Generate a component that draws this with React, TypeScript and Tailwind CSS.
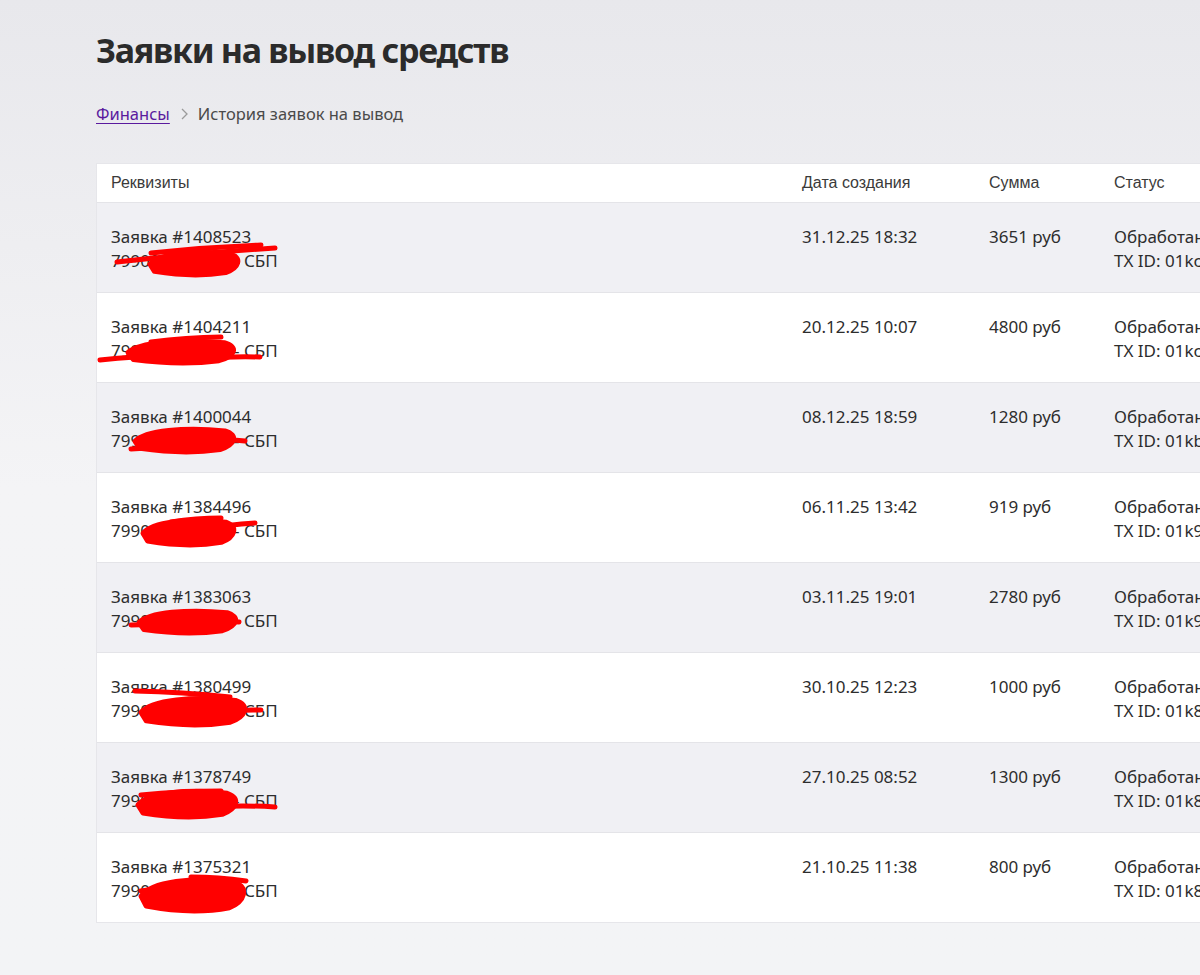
import React from 'react';

type Blob = { x0: number; y0: number; x1: number; y1: number };
type Tail = [number, number, number, number];

type Row = {
  id: string;
  date: string;
  sum: string;
  tx: string;
  blob: Blob;
  tails: Tail[];
};

// redaction marks are in cell coordinates (cell origin = first text line top-left)
const rows: Row[] = [
  { id: '1408523', date: '31.12.25 18:32', sum: '3651 руб', tx: '01kc', blob: { x0: 39, y0: 26, x1: 128, y1: 50 }, tails: [[6, 37, 164, 23], [40, 28, 150, 20]] },
  { id: '1404211', date: '20.12.25 10:07', sum: '4800 руб', tx: '01kc', blob: { x0: 17, y0: 25, x1: 124, y1: 48 }, tails: [[-11, 45, 60, 41], [90, 44, 149, 42], [40, 27, 110, 22]] },
  { id: '1400044', date: '08.12.25 18:59', sum: '1280 руб', tx: '01kb', blob: { x0: 24, y0: 23, x1: 124, y1: 47 }, tails: [[100, 36, 134, 36], [20, 44, 70, 44]] },
  { id: '1384496', date: '06.11.25 13:42', sum: '919 руб', tx: '01k9', blob: { x0: 32, y0: 24, x1: 124, y1: 50 }, tails: [[90, 35, 144, 28], [60, 27, 110, 23]] },
  { id: '1383063', date: '03.11.25 19:01', sum: '2780 руб', tx: '01k9', blob: { x0: 28, y0: 25, x1: 126, y1: 48 }, tails: [[20, 40, 60, 42], [100, 38, 128, 37]] },
  { id: '1380499', date: '30.10.25 12:23', sum: '1000 руб', tx: '01k8', blob: { x0: 30, y0: 22, x1: 135, y1: 50 }, tails: [[24, 16, 119, 22], [90, 38, 150, 35]] },
  { id: '1378749', date: '27.10.25 08:52', sum: '1300 руб', tx: '01k8', blob: { x0: 27, y0: 25, x1: 126, y1: 52 }, tails: [[100, 42, 164, 42], [30, 30, 110, 26]] },
  { id: '1375321', date: '21.10.25 11:38', sum: '800 руб', tx: '01k8', blob: { x0: 30, y0: 23, x1: 134, y1: 56 }, tails: [[80, 22, 135, 26], [30, 36, 60, 34]] },
];

const blobPath = ({ x0, y0, x1, y1 }: Blob) => {
  const w = x1 - x0;
  const h = y1 - y0;
  return `M ${x0} ${y0 + h * 0.55} C ${x0 + w * 0.1} ${y0 + h * 0.1}, ${x0 + w * 0.5} ${y0 - h * 0.05}, ${x1 - w * 0.1} ${y0 + h * 0.12} C ${x1 + w * 0.04} ${y0 + h * 0.3}, ${x1} ${y0 + h * 0.7}, ${x1 - w * 0.15} ${y1 - h * 0.1} C ${x0 + w * 0.6} ${y1 + h * 0.05}, ${x0 + w * 0.3} ${y1}, ${x0 + w * 0.05} ${y1 - h * 0.15} Z`;
};

const Redaction: React.FC<{ blob: Blob; tails: Tail[] }> = ({ blob, tails }) => (
  <svg className="pointer-events-none absolute left-[-20px] top-0 h-[70px] w-[220px] overflow-visible" viewBox="-20 0 220 70">
    <path d={blobPath(blob)} fill="#ff0000" stroke="#ff0000" strokeWidth={5} strokeLinejoin="round" />
    {tails.map(([a, b, c, d], i) => (
      <path
        key={i}
        d={`M ${a} ${b} Q ${(a + c) / 2} ${(b + d) / 2 - 2} ${c} ${d}`}
        fill="none"
        stroke="#ff0000"
        strokeWidth={5}
        strokeLinecap="round"
      />
    ))}
  </svg>
);

export default function App() {
  return (
    <div
      className="min-h-screen w-full overflow-hidden bg-gradient-to-b from-[#e8e8ec] via-[#f4f4f6] to-[#f3f4f6] text-[#2d2d2d]"
      style={{ fontFamily: '"Noto Sans", "Open Sans", sans-serif' }}
    >
      <div className="pl-[96px] pt-[26px]">
        <h1 className="text-[34px] font-bold leading-[48px] tracking-[-1.3px] text-[#2b2b2b]">Заявки на вывод средств</h1>

        <div className="mt-[28px] flex items-center text-[16.5px] leading-[24px]">
          <a href="#" className="text-[#5a1a9e] underline underline-offset-[3px]">Финансы</a>
          <svg className="mx-[8px] h-[14px] w-[12px]" viewBox="0 0 12 14">
            <path d="M4 2 L9 7 L4 12" fill="none" stroke="#9a9a9a" strokeWidth="1.3" />
          </svg>
          <span className="text-[#4a4a4a]">История заявок на вывод</span>
        </div>

        <div className="mt-[37px] w-[1300px] border border-[#e6e6ea] bg-white">
          <div
            className="grid h-[38px] grid-cols-[691px_187px_125px_1fr] items-center pl-[14px] text-[16px] text-[#3a3a3a]"
            style={{ fontFamily: '"Liberation Sans", Arial, sans-serif' }}
          >
            <div>Реквизиты</div>
            <div>Дата создания</div>
            <div>Сумма</div>
            <div>Статус</div>
          </div>
          {rows.map((r, i) => (
            <div
              key={r.id}
              className={`grid h-[90px] grid-cols-[691px_187px_125px_1fr] border-t border-[#e4e4e8] pl-[14px] pt-[22px] text-[17px] leading-[24px] ${
                i % 2 === 0 ? 'bg-[#f0f0f4]' : 'bg-white'
              }`}
            >
              <div className="relative">
                <div>Заявка #{r.id}</div>
                <div className="flex whitespace-nowrap">
                  <span className="inline-block w-[120px] overflow-hidden">79900000000</span>
                  <span>– СБП</span>
                </div>
                <Redaction blob={r.blob} tails={r.tails} />
              </div>
              <div>{r.date}</div>
              <div>{r.sum}</div>
              <div className="whitespace-nowrap">
                <div>Обработана</div>
                <div>TX ID: {r.tx}xq7m3v9p</div>
              </div>
            </div>
          ))}
        </div>
      </div>
    </div>
  );
}
